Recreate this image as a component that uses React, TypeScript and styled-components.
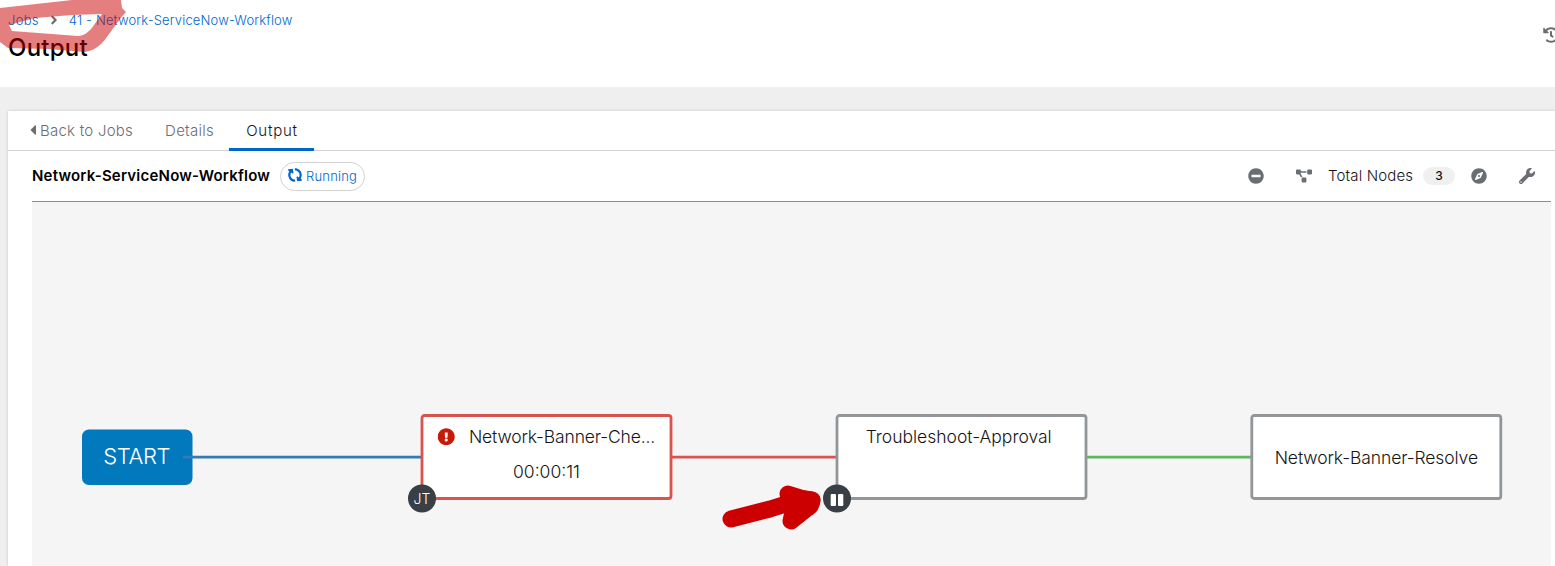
import React from "react";
import styled, { createGlobalStyle, css } from "styled-components";
import {
  FaAngleRight, FaCaretLeft, FaCompass, FaExclamationCircle, FaHistory,
  FaMinusCircle, FaProjectDiagram, FaSyncAlt, FaWrench,
} from "react-icons/fa";

const Global = createGlobalStyle`
  * { box-sizing: border-box; }
  body {
    margin: 0;
    overflow: hidden;
    background: #efefef;
    color: #151515;
    font-family: Inter, "Open Sans", sans-serif;
  }
`;

const Page = styled.div`
  position: relative;
  width: 1555px;
  height: 566px;
  overflow: hidden;
  display: flex;
  flex-direction: column;
  gap: 24px;
`;

const Header = styled.header`
  flex: none;
  height: 87px;
  background: #fff;
  padding: 10px 0 0 8px;
  display: flex;
  justify-content: space-between;
`;

const Breadcrumb = styled.nav`
  display: flex;
  align-items: center;
  height: 20px;
  font-size: 13px;
  white-space: nowrap;
`;

const Crumb = styled.a<{ $spacing: number }>`
  color: #06c;
  font-weight: 350;
  letter-spacing: ${(p) => p.$spacing}px;
`;

const Separator = styled.span`
  display: flex;
  justify-content: center;
  width: 30px;
  color: #6a6e73;
  font-size: 14px;
`;

const Title = styled.h1`
  margin: 3px 0 0;
  font-size: 24px;
  line-height: 30px;
  font-weight: 500;
  letter-spacing: 0.25px;
  color: #000;
`;

const HistoryButton = styled.span`
  flex: none;
  width: 12px;
  height: 16px;
  margin-top: 17px;
  overflow: hidden;
  color: #6a6e73;
  font-size: 16px;
  svg { display: block; }
`;

const Card = styled.main`
  flex: 1;
  margin-left: 8px;
  background: #fff;
  box-shadow: 0 0 3px rgba(3, 3, 3, 0.16);
`;

const Tabs = styled.div`
  display: flex;
  height: 40px;
  padding-left: 5px;
  border-bottom: 1px solid #d2d2d2;
`;

const Tab = styled.div<{ $active?: boolean; $width: number }>`
  display: flex;
  align-items: center;
  justify-content: center;
  width: ${(p) => p.$width}px;
  height: 40px;
  padding: 0 0 2px 1px;
  font-size: 15px;
  font-weight: 350;
  letter-spacing: 0.25px;
  color: #6a6e73;
  white-space: nowrap;
  ${(p) => p.$active && css`
    color: #151515;
    border-bottom: 3px solid #06c;
    padding: 1px 0 0 1px;
    letter-spacing: 0.75px;
  `}
`;

const BackIcon = styled(FaCaretLeft)`
  width: 6px;
  height: 16px;
  margin: 0 4px 0 0;
`;

const Toolbar = styled.div`
  display: flex;
  align-items: center;
  height: 50px;
  margin: 0 4px 0 24px;
  padding-right: 16px;
  color: #151515;
`;

const JobName = styled.b`
  width: 248px;
  padding-bottom: 2px;
  font-size: 15px;
  font-weight: 600;
  letter-spacing: 0.21px;
  color: #000;
  white-space: nowrap;
`;

const Status = styled.span`
  display: flex;
  align-items: center;
  gap: 4px;
  height: 29px;
  width: 85px;
  padding-left: 7px;
  border: 1px solid #d2d2d2;
  border-radius: 15px;
  color: #06c;
  font-size: 13px;
  font-weight: 350;
  letter-spacing: 0.2px;
`;

const RunningIcon = styled(FaSyncAlt)`
  flex: none;
  width: 14px;
  height: 14px;
  margin-top: -3px;
  transform: rotate(80deg);
`;

const Actions = styled.div`
  display: flex;
  align-items: center;
  margin-left: auto;
  padding-bottom: 1px;
  color: #6a6e73;
  svg { display: block; width: 16px; height: 16px; }
`;

const NodesLabel = styled.span`
  width: 95px;
  margin-left: 16px;
  font-size: 15px;
  font-weight: 350;
  letter-spacing: 0.15px;
  color: #151515;
  white-space: nowrap;
`;

const Count = styled.span`
  width: 32px;
  height: 18px;
  border-radius: 9px;
  background: #f0f0f0;
  color: #151515;
  font-size: 12px;
  line-height: 18px;
  font-weight: 500;
  text-align: center;
`;

const Gap = styled.span<{ $w: number }>`
  width: ${(p) => p.$w}px;
`;

const Canvas = styled.section`
  position: relative;
  height: 365px;
  margin: 0 4px 0 24px;
  border-top: 1px solid #8a8d90;
  background: #f5f5f5;
`;

const Graph = styled.svg`
  display: block;
`;

const Marker = styled.svg`
  position: absolute;
  top: 0;
  left: 0;
  pointer-events: none;
`;

type NodeProps = { x: number; stroke: string; children: React.ReactNode };

const WorkflowNode = ({ x, stroke, children }: NodeProps) => (
  <g transform={`translate(${x} 415.5)`}>
    <rect width="249" height="83" rx="2.5" fill="#fff" stroke={stroke} strokeWidth="2.8" />
    {children}
  </g>
);

const Label = styled.text<{ $spacing?: number }>`
  font-size: 17.5px;
  font-weight: 350;
  letter-spacing: ${(p) => p.$spacing ?? -0.12}px;
  fill: #151515;
  text-anchor: middle;
`;

const PlainText = styled.text`
  font-weight: 300;
  fill: #fff;
  text-anchor: middle;
`;

export default function App() {
  return (
    <>
      <Global />
      <Page>
        <Header>
          <div>
            <Breadcrumb>
              <Crumb $spacing={0.3}>Jobs</Crumb>
              <Separator><FaAngleRight /></Separator>
              <Crumb $spacing={0.16}>41 - Network-ServiceNow-Workflow</Crumb>
            </Breadcrumb>
            <Title>Output</Title>
          </div>
          <HistoryButton><FaHistory /></HistoryButton>
        </Header>
        <Card>
          <Tabs>
            <Tab $width={136}><BackIcon preserveAspectRatio="none" />Back to Jobs</Tab>
            <Tab $width={80}>Details</Tab>
            <Tab $width={85} $active>Output</Tab>
          </Tabs>
          <Toolbar>
            <JobName>Network-ServiceNow-Workflow</JobName>
            <Status><RunningIcon />Running</Status>
            <Actions>
              <FaMinusCircle />
              <Gap $w={32} />
              <FaProjectDiagram />
              <NodesLabel>Total Nodes</NodesLabel>
              <Count>3</Count>
              <Gap $w={16} />
              <FaCompass />
              <Gap $w={32} />
              <FaWrench />
            </Actions>
          </Toolbar>
          <Canvas>
            <Graph width="1519" height="364" viewBox="32 202 1519 364">
              <rect x="82" y="429.5" width="110.5" height="55.5" rx="7" fill="#0279bd" />
              <PlainText x="136.7" y="464" fontSize="22" letterSpacing="-0.35">START</PlainText>
              <g strokeWidth="2.8">
                <path d="M183 457.2H421" stroke="#337ab7" />
                <path d="M672 457.2H836" stroke="#d9534f" />
                <path d="M1087 457.2H1251" stroke="#5cb85c" />
              </g>
              <WorkflowNode x={422} stroke="#d9534f">
                <FaExclamationCircle x="15.5" y="12.5" size={17.5} color="#c9190b" />
                <Label x="140" y="27.5" $spacing={-0.15}>Network-Banner-Che...</Label>
                <Label x="124.5" y="62" $spacing={0}>00:00:11</Label>
                <circle cy="83" r="14" fill="#393f44" />
                <PlainText y="88" fontSize="14">JT</PlainText>
              </WorkflowNode>
              <WorkflowNode x={837} stroke="#939699">
                <Label x="121.7" y="27.5" $spacing={0}>Troubleshoot-Approval</Label>
                <circle cy="83" r="14" fill="#393f44" />
                <rect x="-6.3" y="78.5" width="5.3" height="12" rx="1" fill="#fff" />
                <rect x="1" y="78.5" width="5.3" height="12" rx="1" fill="#fff" />
              </WorkflowNode>
              <WorkflowNode x={1251.8} stroke="#939699">
                <Label x="124.5" y="48" $spacing={-0.1}>Network-Banner-Resolve</Label>
              </WorkflowNode>
            </Graph>
          </Canvas>
        </Card>
        <Marker width="1555" height="566">
          <path
            d="M0 8L72 0H121L122 8L126 12L120 19L115 26C106 37 102 49 85 52L48 49L8 48L0 42ZM9 25L12 31L78 36C84 36 88 32 91 29L102 14L72 15L35 18Z"
            fill="#cc0000" fillOpacity="0.5" fillRule="evenodd"
          />
          <g fill="none" stroke="#cc0000" strokeWidth="17" strokeLinecap="round" strokeLinejoin="round">
            <path d="M731 519L770 509L786 504L812 500" />
            <path d="M788 494L801 498L812 500Q812 506 806 509L791 521L795 503Z" fill="#cc0000" />
          </g>
        </Marker>
      </Page>
    </>
  );
}
